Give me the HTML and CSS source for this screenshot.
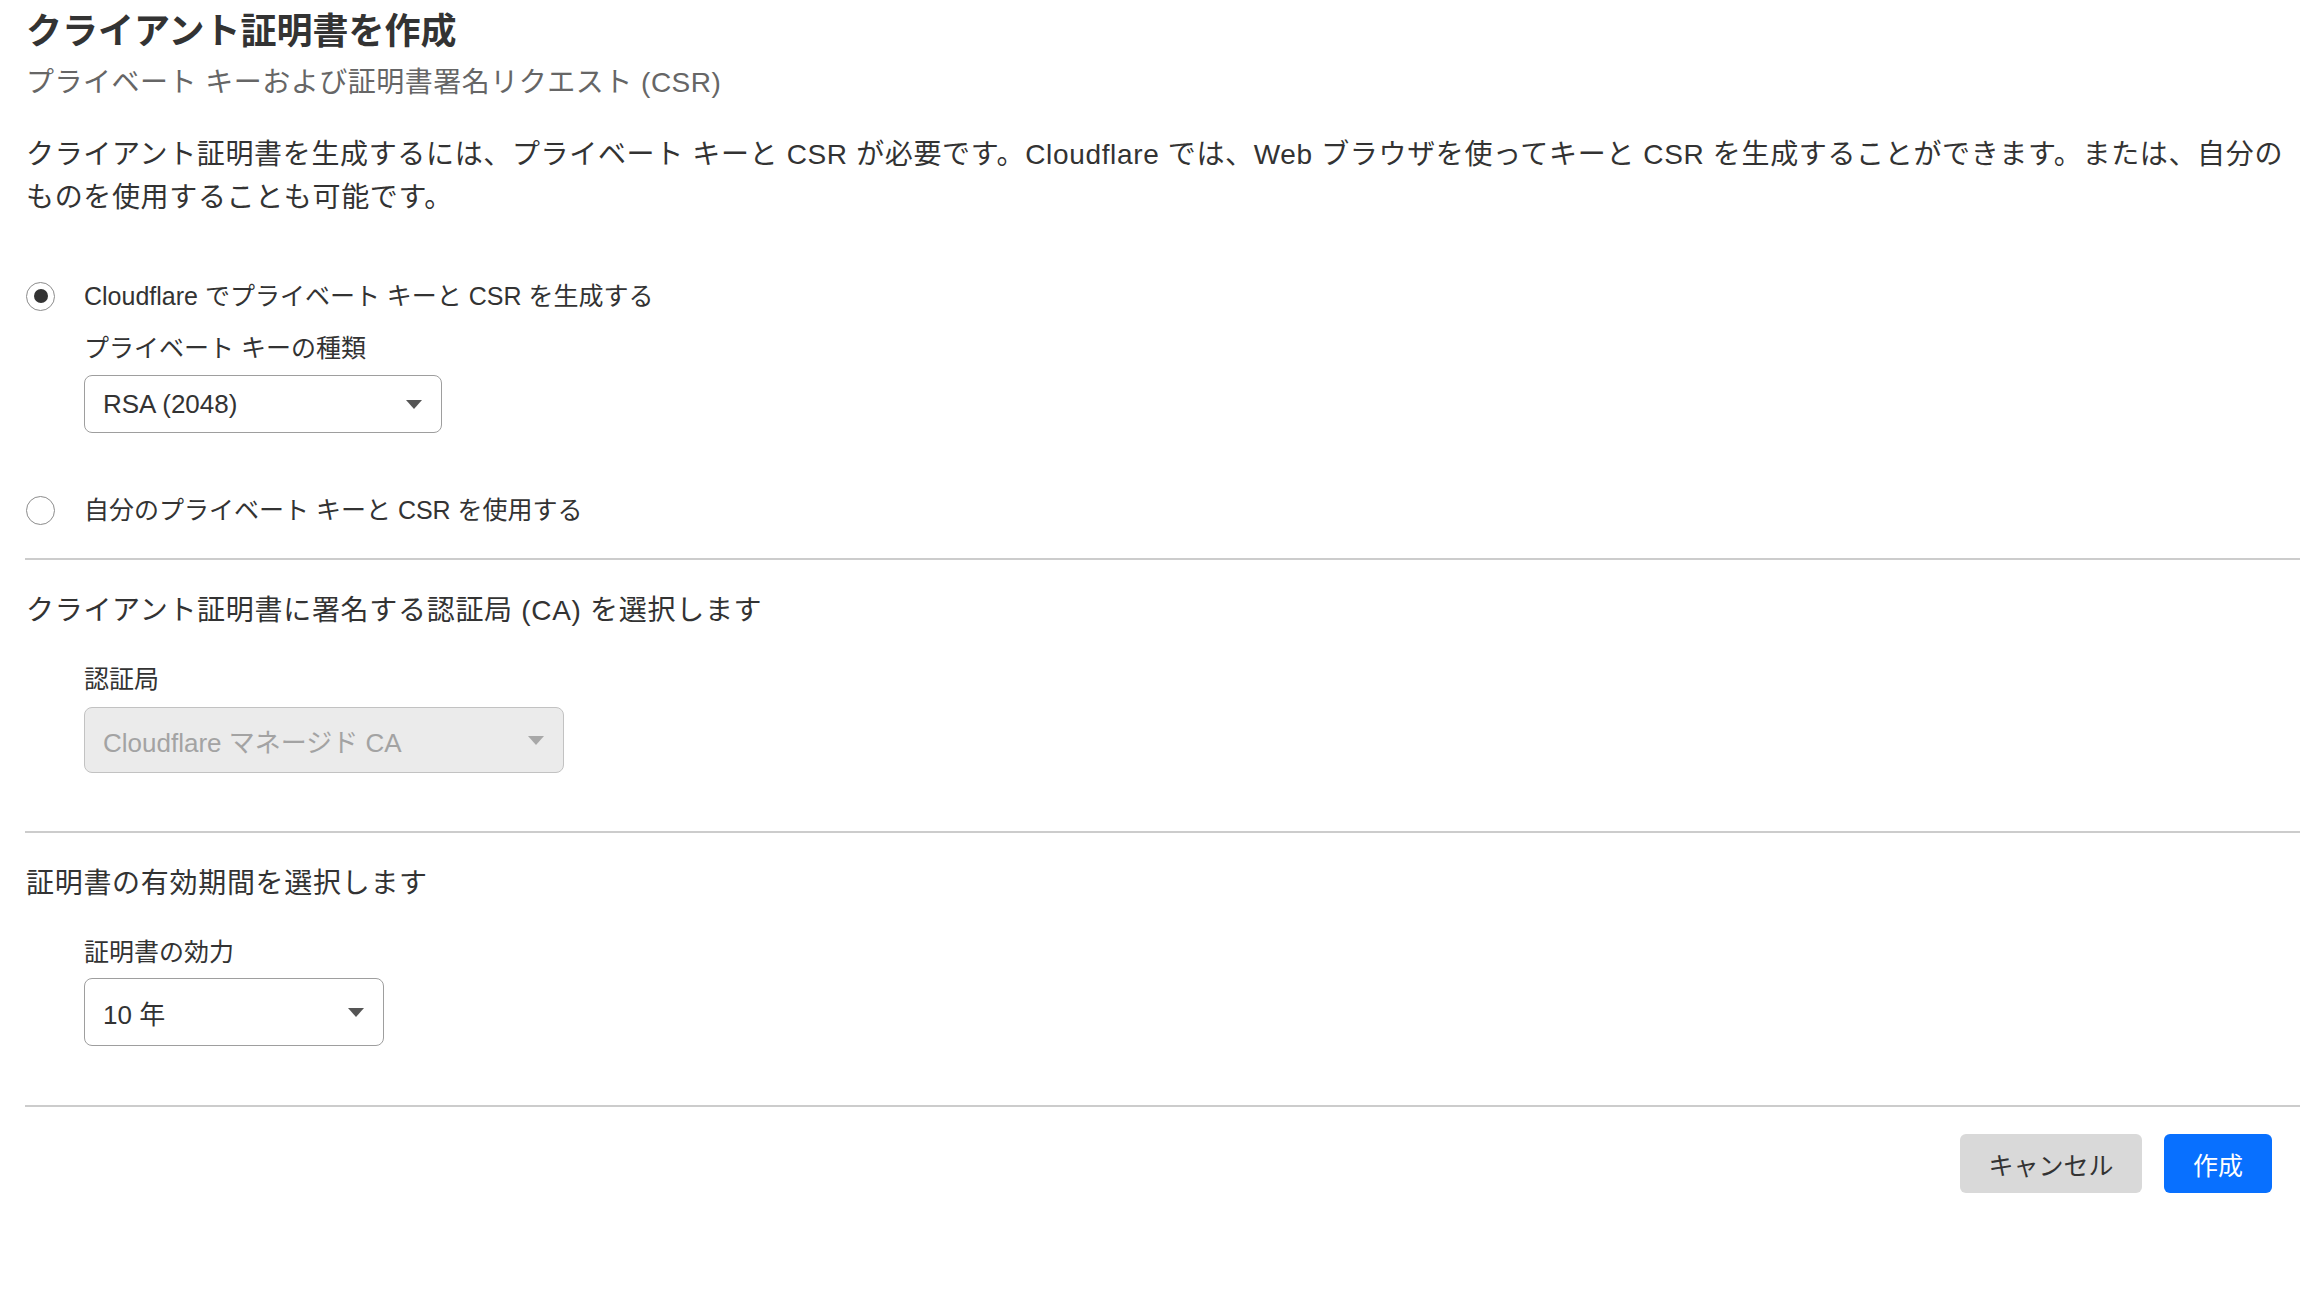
FILE: index.html
```html
<!DOCTYPE html>
<html lang="ja">
<head>
<meta charset="utf-8">
<title>クライアント証明書を作成</title>
<link rel="stylesheet" href="styles.css">
</head>
<body>
<main class="page">
  <header class="head">
    <h1 class="title">クライアント証明書を作成</h1>
    <p class="subtitle">プライベート キーおよび証明書署名リクエスト (CSR)</p>
  </header>
  <p class="intro">クライアント証明書を生成するには、プライベート キーと CSR が必要です。Cloudflare では、Web ブラウザを使ってキーと CSR を生成することができます。または、自分のものを使用することも可能です。</p>

  <div class="options">
    <label class="radio-row">
      <span class="radio is-checked"></span>
      <span class="radio-text">Cloudflare でプライベート キーと CSR を生成する</span>
    </label>
    <div class="field field-first">
      <div class="field-label">プライベート キーの種類</div>
      <div class="select select-key"><span class="select-value">RSA (2048)</span><span class="caret"></span></div>
    </div>
    <label class="radio-row radio-row-second">
      <span class="radio"></span>
      <span class="radio-text">自分のプライベート キーと CSR を使用する</span>
    </label>
  </div>

  <hr class="divider">

  <section class="section">
    <h2 class="section-title">クライアント証明書に署名する認証局 (CA) を選択します</h2>
    <div class="field">
      <div class="field-label">認証局</div>
      <div class="select select-ca is-disabled"><span class="select-value">Cloudflare マネージド CA</span><span class="caret"></span></div>
    </div>
  </section>

  <hr class="divider divider-mid">

  <section class="section">
    <h2 class="section-title">証明書の有効期間を選択します</h2>
    <div class="field">
      <div class="field-label">証明書の効力</div>
      <div class="select select-validity"><span class="select-value">10 年</span><span class="caret"></span></div>
    </div>
  </section>

  <hr class="divider divider-last">

  <footer class="actions">
    <button class="btn btn-cancel" type="button">キャンセル</button>
    <button class="btn btn-primary" type="button">作成</button>
  </footer>
</main>
</body>
</html>
```

FILE: styles.css
```css
html, body {
  margin: 0;
  padding: 0;
  background: #ffffff;
}

body {
  font-family: "Liberation Sans", "Noto Sans CJK JP", sans-serif;
  color: #333333;
}

.page {
  padding: 10px 0 60px 26px;
}

.title {
  margin: 0;
  font-size: 36px;
  line-height: 44px;
  font-weight: 700;
  color: #333333;
}

.subtitle {
  margin: 8px 0 0;
  font-size: 28px;
  line-height: 42px;
  letter-spacing: 0.5px;
  color: #666666;
}

.intro {
  margin: 29px 6px 0 0;
  font-size: 28px;
  line-height: 43px;
  letter-spacing: 0.65px;
  color: #333333;
}

.options {
  display: flex;
  flex-direction: column;
}

.radio-row {
  display: flex;
  align-items: center;
  gap: 29px;
  height: 40px;
  margin-top: 57px;
  font-size: 25px;
  line-height: 40px;
}

.radio-row-second {
  margin-top: 57px;
}

.radio {
  position: relative;
  flex: none;
  width: 29px;
  height: 29px;
  box-sizing: border-box;
  border: 1.5px solid #8c8c8c;
  border-radius: 50%;
  background: #ffffff;
}

.radio.is-checked::after {
  content: "";
  position: absolute;
  left: 50%;
  top: 50%;
  width: 14px;
  height: 14px;
  margin: -7px 0 0 -7px;
  border-radius: 50%;
  background: #333333;
}

.field {
  padding-left: 58px;
  margin-top: 29px;
}

.field-first {
  margin-top: 14px;
}

.field-label {
  font-size: 25px;
  line-height: 36px;
  color: #333333;
}

.select {
  display: flex;
  align-items: center;
  justify-content: space-between;
  box-sizing: border-box;
  margin-top: 10px;
  padding: 0 19px 0 18px;
  border: 1px solid #9e9e9e;
  border-radius: 8px;
  background: #ffffff;
  font-size: 26px;
  color: #333333;
}

.select-key {
  width: 358px;
  height: 58px;
  margin-top: 9px;
}

.select-ca {
  width: 480px;
  height: 66px;
  margin-top: 10px;
}

.select-validity {
  width: 300px;
  height: 68px;
  margin-top: 8px;
}

.caret {
  flex: none;
  width: 0;
  height: 0;
  border-left: 8px solid transparent;
  border-right: 8px solid transparent;
  border-top: 9px solid #555555;
}

.select.is-disabled {
  background: #ebebeb;
  border-color: #c2c2c2;
  color: #a3a3a3;
}

.select.is-disabled .caret {
  border-top-color: #a8a8a8;
}

.divider {
  height: 0;
  margin: 28px 0 0 -1px;
  border: 0;
  border-top: 2px solid #cccccc;
}

.divider-mid {
  margin-top: 58px;
}

.divider-last {
  margin-top: 59px;
}

.section-title {
  margin: 30px 0 0;
  font-size: 28px;
  line-height: 42px;
  font-weight: 400;
  letter-spacing: 0.7px;
  color: #333333;
}

.actions {
  display: flex;
  justify-content: flex-end;
  gap: 22px;
  margin-top: 27px;
  padding-right: 28px;
}

.btn {
  height: 59px;
  border: 0;
  border-radius: 6px;
  font-family: inherit;
  font-size: 25px;
  cursor: pointer;
}

.btn-cancel {
  width: 182px;
  background: #d9d9d9;
  color: #333333;
}

.btn-primary {
  width: 108px;
  background: #0870ff;
  color: #ffffff;
}
```
